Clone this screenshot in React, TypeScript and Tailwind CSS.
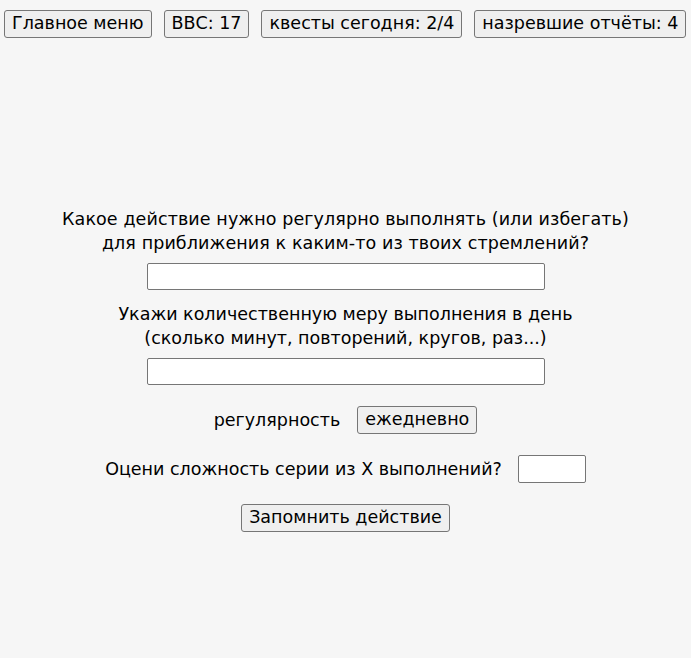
import { useState } from "react"

const btn =
  "h-[28px] px-[7px] bg-[#efefef] border border-[#767676] rounded-[3px] text-[17.5px] leading-none text-black whitespace-nowrap"

export default function App() {
  const [action, setAction] = useState("")
  const [measure, setMeasure] = useState("")
  const [difficulty, setDifficulty] = useState("")

  return (
    <div className="min-h-[658px] bg-[#f6f6f6] text-black text-[17.5px] font-['DejaVu_Sans',sans-serif]">
      {/* top bar */}
      <div className="flex items-center gap-[12px] pl-[4px] pt-[10px]">
        <button className={btn}>Главное меню</button>
        <button className={btn}>ВВС: 17</button>
        <button className={btn}>квесты сегодня: 2/4</button>
        <button className={btn}>назревшие отчёты: 4</button>
      </div>

      {/* form */}
      <div className="flex flex-col items-center mt-[169px] text-center">
        <p className="leading-[24px] tracking-[0.1px]">
          Какое действие нужно регулярно выполнять (или избегать)
          <br />
          для приближения к каким-то из твоих стремлений?
        </p>
        <input
          value={action}
          onChange={(e) => setAction(e.target.value)}
          className="mt-[8px] w-[398px] h-[27px] bg-white border border-[#767676] rounded-[2px]"
        />
        <p className="leading-[24px] mt-[12px]">
          Укажи количественную меру выполнения в день
          <br />
          (сколько минут, повторений, кругов, раз...)
        </p>
        <input
          value={measure}
          onChange={(e) => setMeasure(e.target.value)}
          className="mt-[8px] w-[398px] h-[27px] bg-white border border-[#767676] rounded-[2px]"
        />
        <div className="flex items-center gap-[17px] mt-[21px]">
          <span>регулярность</span>
          <button className={btn}>ежедневно</button>
        </div>
        <div className="flex items-center gap-[16px] mt-[21px]">
          <span>Оцени сложность серии из X выполнений?</span>
          <input
            value={difficulty}
            onChange={(e) => setDifficulty(e.target.value)}
            className="w-[68px] h-[28px] bg-white border border-[#767676] rounded-[2px]"
          />
        </div>
        <button className={btn + " mt-[21px]"}>Запомнить действие</button>
      </div>
    </div>
  )
}
